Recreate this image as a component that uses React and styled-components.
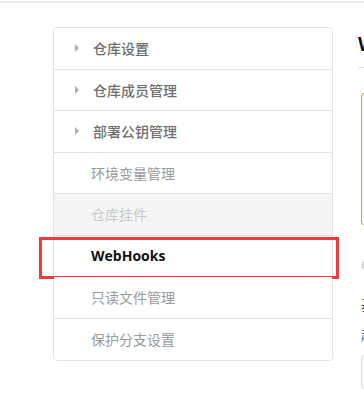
import React from "react";
import styled, { createGlobalStyle } from "styled-components";

const Global = createGlobalStyle`
  html, body { margin: 0; padding: 0; background: #fff; }
  body { overflow: hidden; font-family: "Noto Sans CJK SC", "Noto Sans", sans-serif; }
`;

const TopBar = styled.div`
  height: 1px;
  border-bottom: 2px solid #ececec;
`;

const Layout = styled.div`
  display: flex;
  align-items: flex-start;
  padding: 24px 0 0 53px;
  width: 900px;
`;

const Sidebar = styled.nav`
  width: 278px;
  flex: none;
  border: 1px solid #e3e3e3;
  border-radius: 4px;
  overflow: visible;
`;

const Item = styled.div`
  position: relative;
  box-sizing: border-box;
  height: 41.5px;
  display: flex;
  align-items: center;
  padding-left: ${(p) => (p.$arrow ? "21px" : "37px")};
  border-bottom: 1px solid #e3e3e3;
  background: ${(p) => (p.$disabled ? "#f5f5f5" : "#fff")};
  color: ${(p) =>
    p.$active ? "#111" : p.$disabled ? "#c8c8c8" : p.$arrow ? "#6f6f6f" : "#9a9a9a"};
  font-size: 14px;
  font-weight: ${(p) => (p.$active ? 700 : p.$arrow ? 500 : 400)};
  font-family: ${(p) =>
    p.$active ? '"Open Sans", "Noto Sans", sans-serif' : '"Noto Sans CJK SC", sans-serif'};
  &:last-child { border-bottom: none; }
  &:first-child { border-radius: 4px 4px 0 0; }
  &:last-child { border-radius: 0 0 4px 4px; }
`;

const Arrow = styled.span`
  width: 0;
  height: 0;
  border-top: 4px solid transparent;
  border-bottom: 4px solid transparent;
  border-left: 4px solid #b0b0b0;
  margin-right: 14px;
`;

const Highlight = styled.div`
  position: absolute;
  left: -15px;
  right: -7px;
  top: 1px;
  bottom: -3px;
  border: 3px solid #f23a3a;
  pointer-events: none;
`;

const Content = styled.main`
  margin-left: 28px;
  width: 500px;
  padding-top: 4px;
`;

const Title = styled.h2`
  margin: 0;
  font-family: "Open Sans", "Noto Sans", sans-serif;
  font-size: 19px;
  font-weight: 700;
  color: #111;
  line-height: 26px;
  padding-bottom: 10px;
  border-bottom: 1px solid #e5e5e5;
  margin-left: -3px;
`;

const Notice = styled.div`
  margin-top: 25px;
  height: 130px;
  border: 1px solid #c9a235;
  border-radius: 3px;
  background: #fffef6;
`;

const Hint = styled.p`
  margin: 32px 0 0;
  font-size: 12px;
  color: #999;
  line-height: 16px;
`;

const Label = styled.p`
  margin: ${(p) => p.$mt}px 0 0;
  font-size: 14px;
  color: ${(p) => p.$color};
  line-height: 18px;
`;

const InputBox = styled.div`
  margin-top: 12px;
  height: 32px;
  border: 1px solid #e3e3e3;
  border-radius: 3px;
  background: #f7f7f7;
`;

const items = [
  { label: "仓库设置", arrow: true },
  { label: "仓库成员管理", arrow: true },
  { label: "部署公钥管理", arrow: true },
  { label: "环境变量管理" },
  { label: "仓库挂件", disabled: true },
  { label: "WebHooks", active: true },
  { label: "只读文件管理" },
  { label: "保护分支设置" },
];

export default function App() {
  return (
    <>
      <Global />
      <TopBar />
      <Layout>
        <Sidebar>
          {items.map((it) => (
            <Item
              key={it.label}
              $arrow={it.arrow}
              $disabled={it.disabled}
              $active={it.active}
            >
              {it.arrow && <Arrow />}
              {it.label}
              {it.active && <Highlight />}
            </Item>
          ))}
        </Sidebar>
        <Content>
          <Title>WebHooks</Title>
          <Notice />
          <Hint>© 说明</Hint>
          <Label $mt={22} $color="#333">基本信息</Label>
          <Label $mt={12} $color="#4a6fa5">超链接</Label>
          <InputBox />
        </Content>
      </Layout>
    </>
  );
}
